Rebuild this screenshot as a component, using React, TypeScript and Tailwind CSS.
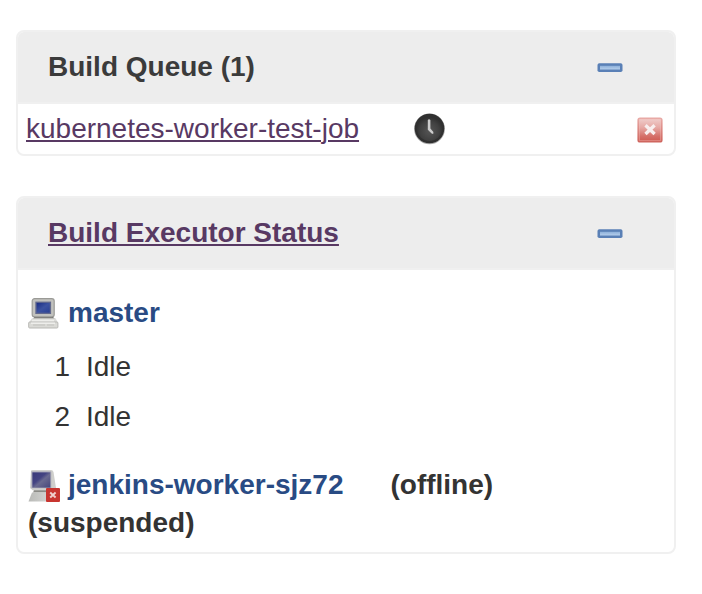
import type { ReactNode } from "react";

function CollapseIcon() {
  return (
    <svg width="26" height="11" viewBox="0 0 26 11" className="mr-[51px] mt-px shrink-0">
      <defs>
        <linearGradient id="bar" x1="0" y1="0" x2="0" y2="1">
          <stop offset="0" stopColor="#8db0da" />
          <stop offset="1" stopColor="#b5cfec" />
        </linearGradient>
      </defs>
      <rect x="0.5" y="1.2" width="25" height="8.8" rx="1.8" fill="#5a80b6" />
      <rect x="3" y="3.8" width="20" height="3.7" fill="url(#bar)" />
    </svg>
  );
}

function ClockIcon() {
  return (
    <svg width="32" height="32" viewBox="0 0 32 32" className="shrink-0">
      <defs>
        <radialGradient id="clock" cx="0.5" cy="0.6" r="0.55">
          <stop offset="0" stopColor="#555555" />
          <stop offset="0.7" stopColor="#404040" />
          <stop offset="1" stopColor="#303030" />
        </radialGradient>
      </defs>
      <circle cx="15.5" cy="15.8" r="15.4" fill="#a8a8a8" />
      <circle cx="15.5" cy="15.5" r="14.8" fill="#303030" />
      <circle cx="15.5" cy="15.5" r="12.5" fill="url(#clock)" />
      <path d="M13.8 7Q15 5.4 16.4 7V15.4L19.4 19L19.2 21L17.6 20.6L13.8 16.8Z" fill="#cccccc" />
    </svg>
  );
}

function CancelIcon() {
  return (
    <svg width="26" height="26" viewBox="0 0 26 26" className="shrink-0">
      <defs>
        <linearGradient id="cancel" x1="0" y1="0" x2="0" y2="1">
          <stop offset="0" stopColor="#f0cfcd" />
          <stop offset="0.4" stopColor="#e6a8a4" />
          <stop offset="0.76" stopColor="#d57069" />
          <stop offset="1" stopColor="#d05850" />
        </linearGradient>
        <linearGradient id="cancelEdge" x1="0" y1="0" x2="0" y2="1">
          <stop offset="0" stopColor="#e9aaa6" />
          <stop offset="1" stopColor="#cf655e" />
        </linearGradient>
      </defs>
      <rect x="1.2" y="1.2" width="23.6" height="23.6" rx="1.8" fill="url(#cancel)" stroke="url(#cancelEdge)" strokeWidth="1.6" />
      <rect x="2.5" y="2.5" width="21" height="21" fill="none" stroke="#f2bdb9" strokeOpacity="0.4" />
      <path d="M8.5 8.2L17.6 17M17.6 8.2L8.5 17" stroke="#f8eeee" strokeWidth="3.3" />
    </svg>
  );
}

function ComputerIcon() {
  return (
    <svg width="32" height="32" viewBox="0 0 32 32" className="mt-[2px] shrink-0">
      <defs>
        <linearGradient id="screen" x1="0" y1="0" x2="1" y2="1">
          <stop offset="0" stopColor="#1a2c84" />
          <stop offset="0.5" stopColor="#3c52a0" />
          <stop offset="1" stopColor="#2a4094" />
        </linearGradient>
      </defs>
      <path d="M7 18H24L27 21H5Z" fill="#6b6b68" />
      <rect x="4.2" y="0.7" width="22" height="18.2" rx="2.4" fill="#c2c2be" stroke="#9a9a96" strokeWidth="1.2" />
      <rect x="7.3" y="3.6" width="15.8" height="12.4" fill="#62698e" />
      <rect x="8.6" y="4.9" width="13.2" height="9.8" fill="url(#screen)" />
      <path d="M4 20.3H27.6L30 25H.7Z" fill="#dcdcd9" />
      <rect x=".7" y="24" width="29.2" height="6" rx="1" fill="#dadad6" stroke="#b9b9b5" />
      <path d="M4 22.5H26M3 25.3H27" stroke="#eeeeeb" strokeWidth="1.5" />
      <path d="M19 27H26M5 27H17" stroke="#c2c2be" />
    </svg>
  );
}

function OfflineComputerIcon() {
  return (
    <svg width="32" height="32" viewBox="0 0 32 32" className="mt-[2px] shrink-0">
      <defs>
        <linearGradient id="offline" x1="0" y1="0" x2="1" y2="1">
          <stop offset="0" stopColor="#38387a" />
          <stop offset="0.4" stopColor="#444482" />
          <stop offset="0.55" stopColor="#6a6a90" />
          <stop offset="1" stopColor="#46467c" />
        </linearGradient>
        <linearGradient id="base" x1="0" y1="0" x2="1" y2="0">
          <stop offset="0" stopColor="#b9bab7" />
          <stop offset="1" stopColor="#dededc" />
        </linearGradient>
      </defs>
      <path d="M3 1Q3 0 5 0H23Q25 0 25.5 2L28 18L24 20.5H5L2 18Z" fill="#cfcfcc" />
      <path d="M3.4 1.4H23.2V18.2H3.4Z" fill="#a6a6b6" />
      <path d="M4.4 2.4H22.3V17.6H4.4Z" fill="url(#offline)" />
      <path d="M6 20.2H25V22.4H5Z" fill="#8b8b86" />
      <path d="M4 22.4H28V31.5H.5Z" fill="url(#base)" />
      <rect x="18" y="18" width="14" height="14" rx="1" fill="#c83530" />
      <path d="M22.2 22.5L27.6 27.5M27.6 22.5L22.2 27.5" stroke="#f0d0cd" strokeWidth="1.9" />
    </svg>
  );
}

function Panel({ title, children }: { title: ReactNode; children: ReactNode }) {
  return (
    <section className="overflow-hidden rounded-[8px] border-2 border-[#f0f0f0] bg-white">
      <header className="flex h-[72px] items-center justify-between border-b-2 border-[#f0f0f0] bg-[#ededed] pl-[30px]">
        <h2 className="font-bold text-[#3b3b3b]">{title}</h2>
        <CollapseIcon />
      </header>
      {children}
    </section>
  );
}

export default function App() {
  return (
    <main className="flex h-[594px] w-[702px] flex-col gap-10 bg-white pl-4 pr-[26px] pt-[30px] font-['Liberation_Sans',Arial,sans-serif] text-[28px] leading-[38px] text-[#333333]">
      <Panel title="Build Queue (1)">
        <div className="flex h-[50px] items-center pl-2 pr-[11px]">
          <a href="#" className="text-[#583963] underline decoration-2 underline-offset-[2px]">
            kubernetes-worker-test-job
          </a>
          <div className="ml-[55px]"><ClockIcon /></div>
          <div className="ml-auto mt-px"><CancelIcon /></div>
        </div>
      </Panel>
      <Panel
        title={
          <a href="#" className="text-[#583963] underline decoration-2 underline-offset-[2px]">
            Build Executor Status
          </a>
        }
      >
        <div className="h-[282px] pl-[10px] pt-[24px]">
          <div className="flex h-[38px] items-center gap-2 font-bold text-[#294b84]">
            <ComputerIcon />
            <a href="#">master</a>
          </div>
          <ol className="pt-[10px] leading-[50px]">
            <li className="flex"><span className="w-[42px] text-right">1</span><span className="pl-4">Idle</span></li>
            <li className="flex"><span className="w-[42px] text-right">2</span><span className="pl-4">Idle</span></li>
          </ol>
          <div className="pt-6 font-bold">
            <div className="flex h-[38px] items-center">
              <OfflineComputerIcon />
              <a href="#" className="ml-2 text-[#294b84]">jenkins-worker-sjz72</a>
              <span className="ml-[47px]">(offline)</span>
            </div>
            <div>(suspended)</div>
          </div>
        </div>
      </Panel>
    </main>
  );
}
